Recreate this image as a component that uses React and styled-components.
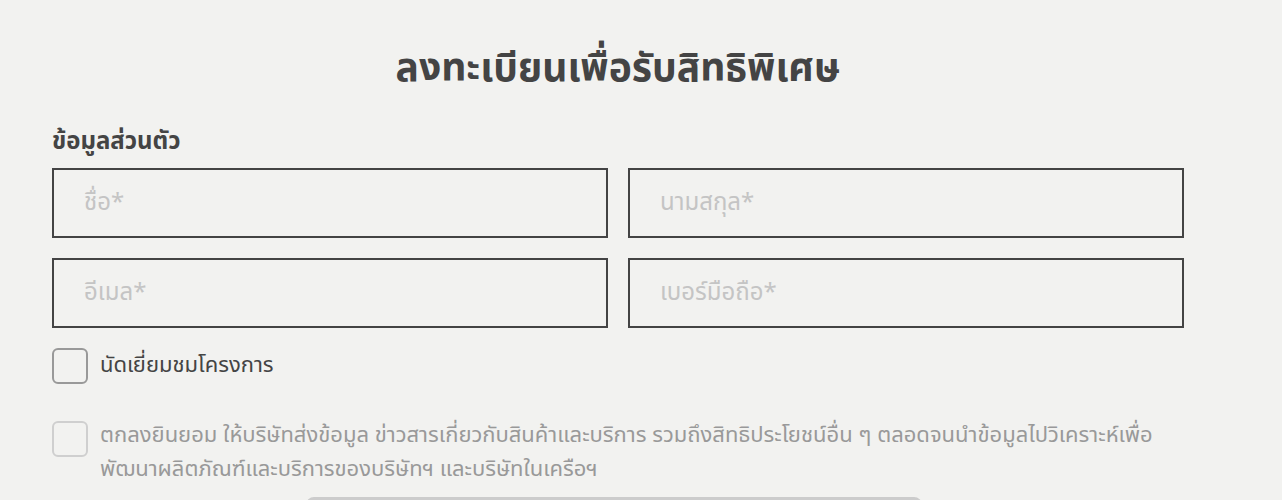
import React from "react";
import styled, { createGlobalStyle } from "styled-components";

const Global = createGlobalStyle`
  html, body { margin: 0; padding: 0; background: #f2f2f0; }
  body { font-family: "Noto Sans Thai", "Noto Sans", "Open Sans", sans-serif; color: #444; }
  * { box-sizing: border-box; }
`;

const Page = styled.div`
  width: 1282px;
  height: 500px;
  overflow: hidden;
  background: #f2f2f0;
`;

const Container = styled.div`
  width: 1132px;
  margin-left: 52px;
  display: flex;
  flex-direction: column;
`;

const Title = styled.h1`
  margin: 44px 0 0;
  text-align: center;
  font-size: 39px;
  line-height: 52px;
  font-weight: 700;
  color: #444;
`;

const SectionLabel = styled.h2`
  margin: 31px 0 0;
  font-size: 24px;
  line-height: 30px;
  font-weight: 700;
  color: #444;
`;

const Grid = styled.div`
  margin-top: 11px;
  display: grid;
  grid-template-columns: 1fr 1fr;
  gap: 20px;
`;

const Field = styled.input`
  height: 70px;
  width: 100%;
  border: 2px solid #444;
  background: transparent;
  padding: 0 30px;
  font-family: inherit;
  font-size: 24px;
  color: #444;
  outline: none;
  &::placeholder { color: #c4c4c4; }
`;

const CheckRow = styled.label`
  display: flex;
  align-items: ${(p) => (p.$multi ? "flex-start" : "center")};
  gap: 12px;
  margin-top: ${(p) => p.$mt}px;
`;

const Box = styled.span`
  flex: none;
  width: 36px;
  height: 36px;
  margin-top: ${(p) => (p.$light ? 2 : 0)}px;
  border: 2px solid ${(p) => (p.$light ? "#cfcfcf" : "#999")};
  border-radius: 6px;
  background: transparent;
`;

const CheckText = styled.span`
  font-size: 22px;
  line-height: ${(p) => (p.$small ? 34 : 30)}px;
  color: ${(p) => (p.$light ? "#999" : "#444")};
`;

const ButtonWrap = styled.div`
  display: flex;
  justify-content: center;
  margin-top: 10px;
`;

const Submit = styled.button`
  width: 616px;
  height: 56px;
  border: none;
  border-radius: 8px;
  background: #ccc;
  margin-left: -8px;
`;

export default function App() {
  return (
    <Page>
      <Global />
      <Container>
        <Title>ลงทะเบียนเพื่อรับสิทธิพิเศษ</Title>
        <SectionLabel>ข้อมูลส่วนตัว</SectionLabel>
        <Grid>
          <Field placeholder="ชื่อ*" />
          <Field placeholder="นามสกุล*" />
          <Field placeholder="อีเมล*" />
          <Field placeholder="เบอร์มือถือ*" />
        </Grid>
        <CheckRow $mt={20}>
          <Box />
          <CheckText>นัดเยี่ยมชมโครงการ</CheckText>
        </CheckRow>
        <CheckRow $mt={35} $multi>
          <Box $light />
          <CheckText $small $light>
            ตกลงยินยอม ให้บริษัทส่งข้อมูล ข่าวสารเกี่ยวกับสินค้าและบริการ รวมถึงสิทธิประโยชน์อื่น ๆ ตลอดจนนำข้อมูลไปวิเคราะห์เพื่อ
            พัฒนาผลิตภัณฑ์และบริการของบริษัทฯ และบริษัทในเครือฯ
          </CheckText>
        </CheckRow>
        <ButtonWrap>
          <Submit />
        </ButtonWrap>
      </Container>
    </Page>
  );
}
